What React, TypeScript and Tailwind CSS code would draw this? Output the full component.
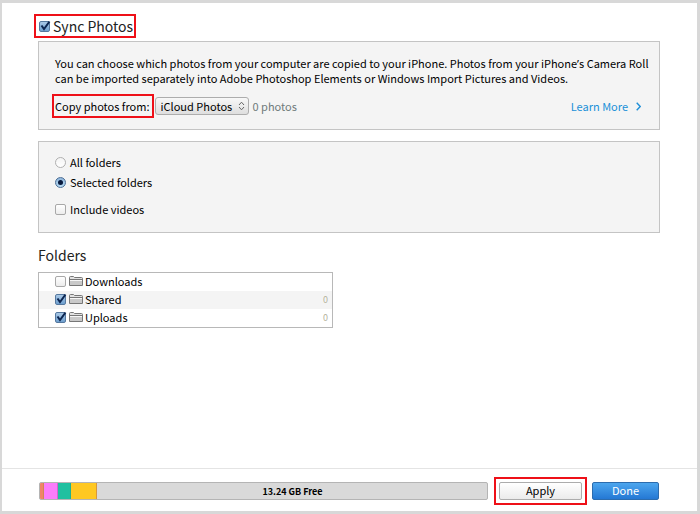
import { useState } from 'react';
import type { InputHTMLAttributes } from 'react';

interface Folder {
  name: string;
  checked: boolean;
  count: number | null;
}

const initialFolders: Folder[] = [
  { name: 'Downloads', checked: false, count: null },
  { name: 'Shared', checked: true, count: 0 },
  { name: 'Uploads', checked: true, count: 0 },
];

// share of the capacity bar, in percent
const usage = [
  { label: 'Audio', share: 0.8, color: 'bg-[#f08468] border-[#d08a50]' },
  { label: 'Photos', share: 3.3, color: 'bg-[#fb7dfb] border-[#d860d0]' },
  { label: 'Apps', share: 2.9, color: 'bg-[#20c0a0] border-[#20b090]' },
  { label: 'Other', share: 5.8, color: 'bg-[#ffc822] border-[#d8983c]' },
];

function CheckBox(props: InputHTMLAttributes<HTMLInputElement>) {
  return (
    <span className="relative inline-block size-[11px] shrink-0">
      <input
        type="checkbox"
        className="peer block size-[11px] appearance-none rounded-[2px] border border-[#a8a8a8] bg-linear-to-b from-white to-[#ececec] checked:border-[#55789f] checked:from-[#a9c8e6] checked:to-[#6fa0cf]"
        {...props}
      />
      <svg
        className="pointer-events-none absolute -top-px left-0 hidden h-3 w-[13px] peer-checked:block"
        viewBox="0 0 13 12"
        fill="none"
        stroke="#0c2550"
        strokeWidth="2"
      >
        <path d="M2.5 5.5L5 9L10.5 1.5" />
      </svg>
    </span>
  );
}

function Radio(props: InputHTMLAttributes<HTMLInputElement>) {
  return (
    <span className="relative inline-block size-[11px] shrink-0">
      <input
        type="radio"
        className="peer block size-[11px] appearance-none rounded-full border border-[#b0b0b0] bg-linear-to-b from-[#f4f4f4] to-white checked:border-[#4c6f96] checked:from-[#8fb5da] checked:to-[#b8dcf4]"
        {...props}
      />
      <span className="pointer-events-none absolute top-[3px] left-[3px] hidden size-[5px] rounded-full bg-[#06183c] peer-checked:block" />
    </span>
  );
}

function FolderIcon() {
  return (
    <svg className="h-3 w-[14px] shrink-0" viewBox="0 0 14 12" fill="none">
      <path d="M0.5 10.5V2.5Q0.5 1.5 1.5 1.5H4.5L5.5 2.5H12.5Q13.5 2.5 13.5 3.5V10.5Z" fill="#e2e2e2" stroke="#777" />
      <path d="M1 4.5H13" stroke="#777" />
      <path d="M1 5.5H13" stroke="#f6f6f6" />
      <path d="M1 6H13V10H1Z" fill="#c9c9c9" />
    </svg>
  );
}

export default function App() {
  const [sync, setSync] = useState(true);
  const [mode, setMode] = useState('selected');
  const [videos, setVideos] = useState(false);
  const [folders, setFolders] = useState(initialFolders);

  const toggleFolder = (name: string) => {
    setFolders(folders.map((f) => (f.name === name ? { ...f, checked: !f.checked } : f)));
  };

  return (
    <div className="flex min-h-screen flex-col border-2 border-t-3 border-r-3 border-b-3 border-[#d8d8d8] bg-white font-['Noto_Sans_CJK_SC','Noto_Sans',sans-serif] text-[11px] leading-[15px] text-black">
      <main className="flex-1 pt-[11px] pr-[37px] pb-6 pl-9">
        <label className="-ml-1 inline-flex h-6 items-center gap-[3px] border-2 border-[#ee1018] pr-px pl-[3px] align-top text-[14px] text-[#222]">
          <CheckBox checked={sync} onChange={() => setSync(!sync)} />
          Sync Photos
        </label>

        <section className="mt-[3px] border border-[#c4c4c4] bg-[#f4f4f4] pt-[14px] pr-2 pb-[11px] pl-4">
          <p>
            You can choose which photos from your computer are copied to your iPhone. Photos from your iPhone
            {/* the CJK face draws this mark full width */}
            <span className="font-['Noto_Sans',sans-serif]">’</span>s Camera Roll can be imported separately into Adobe
            Photoshop Elements or Windows Import Pictures and Videos.
          </p>
          <div className="mt-2 -ml-[3px] flex items-center">
            <label htmlFor="source" className="flex h-6 items-center border-2 border-[#ee1018] pr-[2px] pl-px whitespace-nowrap">
              Copy photos from:
            </label>
            <div className="relative ml-px">
              <select
                id="source"
                className="block h-[18px] w-[94px] appearance-none rounded-[3px] border border-[#adadad] bg-linear-to-b from-[#f8f8f8] to-[#dedede] pl-[5px]"
              >
                <option>iCloud Photos</option>
              </select>
              <svg
                className="pointer-events-none absolute top-[4px] right-1 h-[10px] w-[7px]"
                viewBox="0 0 7 10"
                fill="none"
                stroke="#666"
              >
                <path d="M1 4L3.5 1.2L6 4M1 6L3.5 8.8L6 6" />
              </svg>
            </div>
            <span className="ml-1 text-[#6f7b7b]">0 photos</span>
            <a href="#learn-more" className="mr-[10px] ml-auto flex items-center gap-2 text-[#2090d8]">
              Learn More
              <svg className="h-[9px] w-[5px]" viewBox="0 0 5 9" fill="none" stroke="currentColor" strokeWidth="1.4">
                <path d="M0.7 0.7L4.2 4.5L0.7 8.3" />
              </svg>
            </a>
          </div>
        </section>

        <section className="mt-[11px] border border-[#c4c4c4] bg-[#f4f4f4] px-4 pt-[13px] pb-[15px]">
          <label className="flex w-fit items-center gap-1 pb-[5px]">
            <Radio name="mode" checked={mode === 'all'} onChange={() => setMode('all')} />
            All folders
          </label>
          <label className="flex w-fit items-center gap-1">
            <Radio name="mode" checked={mode === 'selected'} onChange={() => setMode('selected')} />
            Selected folders
          </label>
          <label className="mt-3 flex w-fit items-center gap-1">
            <CheckBox checked={videos} onChange={() => setVideos(!videos)} />
            Include videos
          </label>
        </section>

        <h2 className="mt-3 text-[14px] leading-5 text-[#222]">Folders</h2>
        <table className="mt-[7px] w-[295px] border-separate border-spacing-0 border border-[#b8b8b8]">
          <tbody>
            {folders.map((f, i) => (
              <tr key={f.name} className={i % 2 ? 'bg-[#f4f4f4]' : 'bg-white'}>
                <td className="h-[18px] p-0 pb-[2px] pl-4">
                  <label className="flex w-fit items-center gap-[2px]">
                    <CheckBox checked={f.checked} onChange={() => toggleFolder(f.name)} />
                    <span className="flex items-center gap-[2px] pl-px">
                      <FolderIcon />
                      {f.name}
                    </span>
                  </label>
                </td>
                <td className="p-0 pr-1 pb-[2px] text-right text-[9px] text-[#b4b49c]">{f.count}</td>
              </tr>
            ))}
          </tbody>
        </table>
      </main>

      <footer className="flex items-center border-t border-[#e4e4e4] pt-2 pr-[38px] pb-[6px] pl-[37px]">
        <div className="relative h-[18px] flex-1 overflow-hidden rounded-[2px] border border-[#b4b4b4] bg-[#d9d9d9]">
          <div className="flex h-full">
            {usage.map((u) => (
              <div key={u.label} className={`border-r ${u.color}`} style={{ width: `${u.share}%` }} />
            ))}
          </div>
          <span className="absolute inset-0 flex items-center justify-center pl-[58px] text-[9px] font-bold">13.24 GB Free</span>
        </div>
        <div className="ml-[6px] border-2 border-[#ee1018] p-[3px]">
          <button
            type="button"
            className="block h-[18px] w-[83px] rounded-[2px] border border-[#acacac] bg-linear-to-b from-white to-[#ebebeb] pb-px leading-[15px]"
          >
            Apply
          </button>
        </div>
        <button
          type="button"
          className="ml-[5px] h-[18px] w-[67px] rounded-[2px] border border-[#2c6cae] bg-linear-to-b from-[#4ca6ee] to-[#2478d4] pb-px leading-[15px] text-white"
        >
          Done
        </button>
      </footer>
    </div>
  );
}
